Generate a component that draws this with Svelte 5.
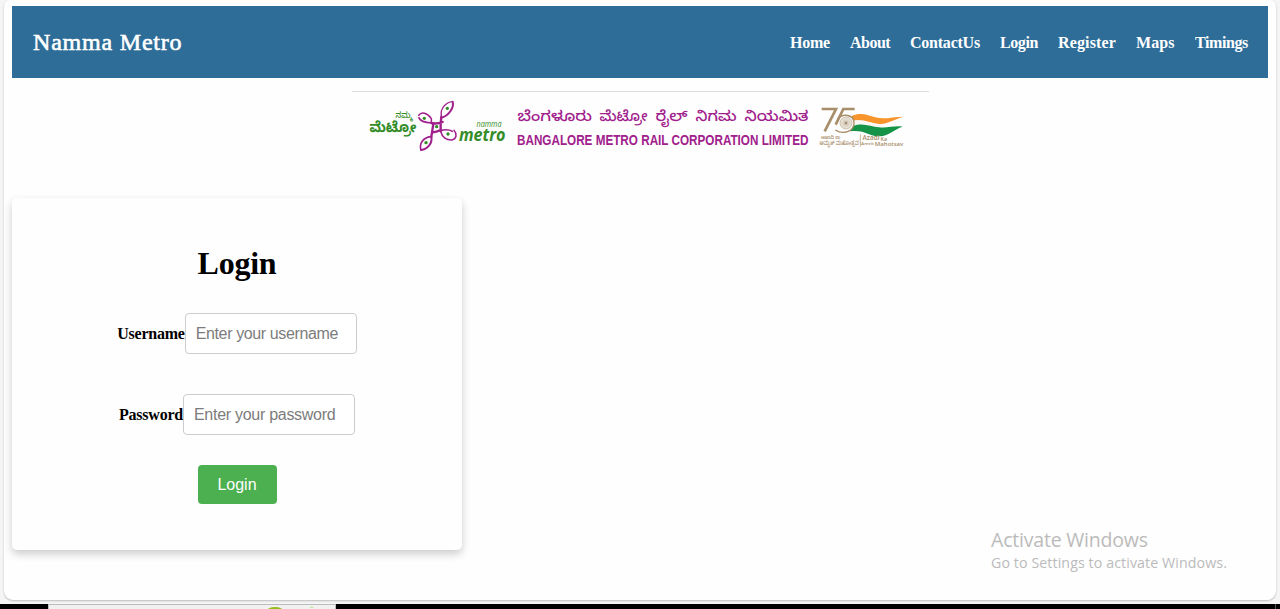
<script>
  const links = [
    { name: 'Home', width: 40, spacing: -0.27 },
    { name: 'About', width: 40, spacing: -0.5 },
    { name: 'ContactUs', width: 70, spacing: -0.23 },
    { name: 'Login', width: 38, spacing: -0.4 },
    { name: 'Register', width: 58, spacing: 0.15 },
    { name: 'Maps', width: 39, spacing: 0.1 },
    { name: 'Timings', width: 53, spacing: -0.4 }
  ];
  const fields = [
    { id: 'username', label: 'Username', type: 'text', hint: 'Enter your username' },
    { id: 'password', label: 'Password', type: 'password', hint: 'Enter your password' }
  ];
  const spokes = Array.from({ length: 12 }, (_, i) => i * 15);
</script>

<div class="screen">
  <main class="page">
    <header>
      <div class="brand">Namma Metro</div>
      <nav>
        {#each links as link}<a href="#top" style="width: {link.width}px; letter-spacing: {link.spacing}px">{link.name}</a>{/each}
      </nav>
    </header>

    <div class="banner">
      <svg width="577" height="66" viewBox="352 92 577 66" role="img" aria-label="Bangalore Metro Rail Corporation Limited">
        <g class="green kannada">
          <text x="395.5" y="118" font-size="8.5" font-weight="500" textLength="17" lengthAdjust="spacingAndGlyphs">ನಮ್ಮ</text>
          <text x="369.5" y="132" font-size="14.5" font-weight="700" textLength="47" lengthAdjust="spacingAndGlyphs">ಮೆಟ್ರೋ</text>
        </g>
        <g transform="translate(414 96) scale(.33333)" fill="none" stroke="#a0208c" stroke-width="5" stroke-linecap="round" stroke-linejoin="round">
          <path d="M82 60C78 40 94 18 116 17" stroke-width="4" />
          <path d="M116 17C121 34 106 57 84 65" stroke-width="6" />
          <path d="M14 58C22 46 40 50 52 68V77" stroke-width="4.5" />
          <path d="M15 65C18 77 35 79 53 81" stroke-width="5" />
          <path d="M52 81Q68 85 86 78M82 62Q79 80 80 106M58 84L52 122M56 109Q67 108 80 102" stroke-width="7" />
          <path d="M50 122C27 125 15 143 21 162" stroke-width="5" />
          <path d="M52 122C56 143 40 160 21 162" stroke-width="6" />
          <path d="M80 103C96 100 109 102 115 106" stroke-width="5" />
          <path d="M81 108C84 124 98 133 114 132C128 129 130 114 120 103" stroke-width="4.5" />
          <g fill="#338c27" stroke="none">
            <circle cx="100" cy="37" r="5" /><circle cx="31" cy="67" r="5" />
            <circle cx="68" cy="92" r="5" /><circle cx="102" cy="114" r="5" /><circle cx="36" cy="140" r="5" />
          </g>
        </g>
        <g class="green latin">
          <text x="476.5" y="127" font-size="8.5" textLength="25" lengthAdjust="spacingAndGlyphs">namma</text>
          <text x="459" y="141" font-size="18" font-weight="700" textLength="46.5" lengthAdjust="spacingAndGlyphs">metro</text>
        </g>
        <g class="kannada purple" font-size="14.5" font-weight="500">
          <text x="517.5" y="120.5" textLength="74.5" lengthAdjust="spacingAndGlyphs">ಬೆಂಗಳೂರು</text>
          <text x="599.5" y="120.5" textLength="48" lengthAdjust="spacingAndGlyphs">ಮೆಟ್ರೋ</text>
          <text x="655.5" y="120.5" textLength="32" lengthAdjust="spacingAndGlyphs">ರೈಲ್</text>
          <text x="695.5" y="120.5" textLength="41" lengthAdjust="spacingAndGlyphs">ನಿಗಮ</text>
          <text x="744.5" y="120.5" textLength="64" lengthAdjust="spacingAndGlyphs">ನಿಯಮಿತ</text>
        </g>
        <text class="corp purple" x="517" y="145" font-size="14.4" font-weight="700" textLength="291.5" lengthAdjust="spacingAndGlyphs">BANGALORE METRO RAIL CORPORATION LIMITED</text>

        <g transform="translate(810 86) scale(.33333)">
          <path d="M125 90C154 77 174 88 196 94C224 102 249 92 280 92C260 97 242 110 215 114C186 117 164 97 130 105Z" fill="#f7942b" />
          <path d="M130 104C164 98 189 116 215 114L222 121C193 126 165 111 130 119Z" fill="#f7f7f4" />
          <path d="M130 119C161 109 184 122 207 124C234 127 253 118 278 122C253 129 238 149 209 151C181 153 164 130 120 136Z" fill="#159447" />
          <g fill="none" stroke="#a88d69" stroke-width="8">
            <path d="M35 69H78L44 136M134 69H100L77 116" />
            <path d="M82 99C99 80 132 86 132 111C132 137 98 147 76 132" stroke-width="4" />
          </g>
          <g stroke="#b8a78e" stroke-width="1" fill="none">
            <circle cx="108" cy="111" r="18" fill="#f4f1e9" stroke-width="2" />
            {#each spokes as angle}<path d="M91 111h34" transform="rotate({angle} 108 111)" />{/each}
            <circle cx="108" cy="111" r="3" fill="#907554" />
          </g>
          <path d="M151 145v37" stroke="#a88d69" stroke-width="2" />
        </g>
        <g class="tan kannada" font-weight="500">
          <text x="821" y="138.5" font-size="5" textLength="19" lengthAdjust="spacingAndGlyphs">ಆಜಾದಿ ಕಾ</text>
          <text x="819.5" y="144.5" font-size="6" textLength="39" lengthAdjust="spacingAndGlyphs">ಅಮೃತ್ ಮಹೋತ್ಸವ</text>
        </g>
        <g class="tan latin" font-weight="600">
          <text x="862.5" y="139.8" font-size="6.2" textLength="17" lengthAdjust="spacingAndGlyphs">Azadi</text>
          <text x="880.5" y="141.2" font-size="4.5" textLength="6.5" lengthAdjust="spacingAndGlyphs">Ka</text>
          <text x="861" y="144.5" font-size="4.2" textLength="13" lengthAdjust="spacingAndGlyphs">Amrit</text>
          <text x="874.8" y="146" font-size="5.8" textLength="28.5" lengthAdjust="spacingAndGlyphs">Mahotsav</text>
        </g>
      </svg>
    </div>

    <form class="card" onsubmit={(event) => event.preventDefault()}>
      <h1>Login</h1>
      {#each fields as field}
        <div class="field">
          <label for={field.id}>{field.label}</label><input class={field.id} id={field.id} type={field.type} placeholder={field.hint} />
        </div>
      {/each}
      <button type="submit">Login</button>
    </form>

    <aside>
      <div class="notice">Activate Windows</div>
      <div class="detail">Go to Settings to activate Windows.</div>
    </aside>
  </main>

  <footer>
    <div class="preview">
      <svg width="286" height="4" viewBox="0 0 286 4" aria-hidden="true">
        <ellipse cx="226" cy="7" rx="9" ry="5" fill="#93bd18" />
        <path d="M260 3q3-3 5 0" fill="#c7e6ac" />
      </svg>
    </div>
    <i></i>
  </footer>
</div>

<style>
  :global(body) { margin: 0; overflow: hidden; }
  * { box-sizing: border-box; }
  .screen { height: 609px; background: #f5f5f5; font-family: "Liberation Serif", serif; overflow: hidden; position: relative; }
  .page { height: 600px; margin: 0 4px; padding: 6px 8px 0; background: #fefefe; border-radius: 6px 6px 9px 9px; box-shadow: 0 1px 2px #bbb; }
  header { height: 72px; background: #2d6d98; color: #fff; display: flex; justify-content: space-between; align-items: center; padding: 0 20px; }
  .brand { font-size: 24px; font-weight: 400; letter-spacing: .8px; padding-left: 1px; -webkit-text-stroke: .6px #fff; }
  nav { display: flex; gap: 20px; padding-top: 1px; }
  nav a { color: #fff; text-decoration: none; font-size: 16px; font-weight: 700; white-space: nowrap; }
  .banner { width: 577px; height: 67px; margin: 13px auto 0; border-top: 1px solid #ddd; }
  .banner svg { display: block; }
  .kannada { font-family: "Noto Sans Kannada", "Noto Sans", sans-serif; }
  .latin { font-family: "Open Sans", sans-serif; font-style: italic; }
  .tan.latin { font-style: normal; }
  .corp { font-family: "Liberation Sans", sans-serif; }
  .green { fill: #338c27; }
  .purple { fill: #a0208c; }
  .tan { fill: #a88d69; }
  .card { width: 450px; height: 352px; margin-top: 40px; padding-top: 46px; display: flex; flex-direction: column; align-items: center; border-radius: 5px; box-shadow: 0 4px 8px rgba(0, 0, 0, .2); background: #fefefe; }
  h1 { font-size: 32px; line-height: 37px; letter-spacing: -.25px; margin: 1px 0 31px; }
  .field { display: flex; align-items: center; height: 41px; margin-bottom: 40px; }
  label { font-size: 16px; font-weight: 700; letter-spacing: -.23px; padding-top: 1px; }
  input { width: 172px; height: 41px; padding: 10px; border: 1px solid #ccc; border-radius: 4px; font: 16px "Liberation Sans", sans-serif; background: #fff; }
  input::placeholder { color: #7c7c7c; opacity: 1; letter-spacing: -.28px; }
  .username::placeholder { letter-spacing: -.38px; }
  button { width: 79px; height: 39px; margin-top: -10px; border: 0; border-radius: 4px; background: #4caf50; color: #fff; font: 16px "Liberation Sans", sans-serif; }
  aside { position: absolute; left: 991px; top: 527px; color: #bbb; font-family: "Open Sans", sans-serif; white-space: nowrap; }
  .notice { font-size: 19.5px; line-height: 26px; letter-spacing: -.2px; }
  .detail { font-size: 14.2px; line-height: 20px; letter-spacing: .1px; }
  footer { height: 5px; margin-top: 4px; padding: 0 4px 0 48px; background: #000; display: flex; justify-content: space-between; }
  .preview { width: 288px; height: 5px; background: #f1f1f1; border: solid #bbb; border-width: 1px 1px 0; }
  .preview svg { display: block; }
  footer i { width: 1px; background: #555; }
</style>
